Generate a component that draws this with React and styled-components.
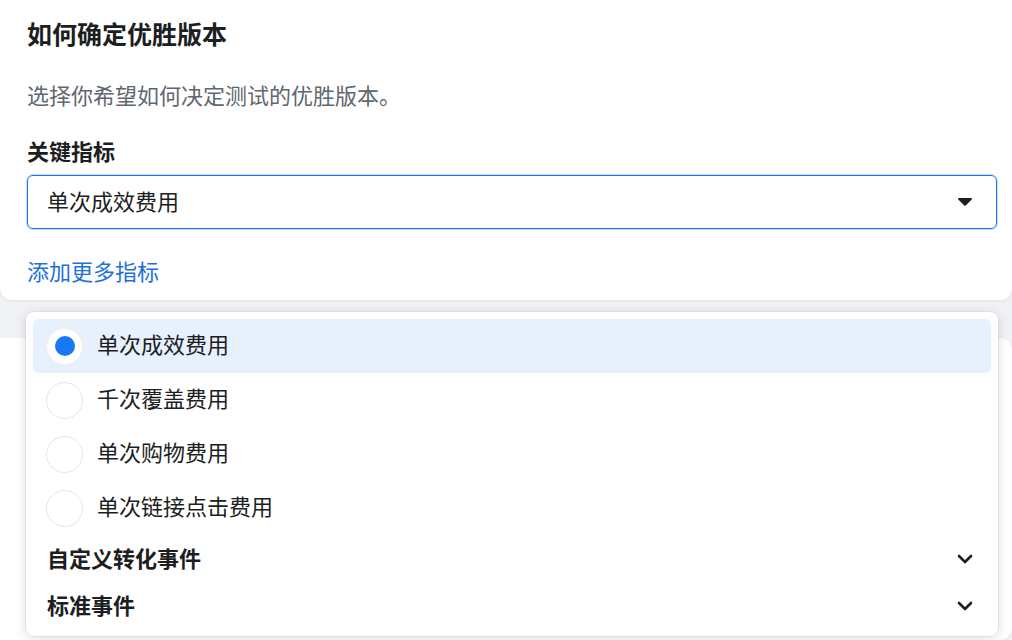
import styled, { createGlobalStyle } from "styled-components";

const GlobalStyle = createGlobalStyle`
  html, body {
    margin: 0;
    padding: 0;
    background: #f0f2f5;
    font-family: "Noto Sans CJK SC", "Noto Sans", sans-serif;
    color: #1c1e21;
  }
`;

const Page = styled.div`
  position: relative;
  width: 1012px;
  height: 640px;
  overflow: hidden;
  display: flex;
  flex-direction: column;
  gap: 38px;
`;

const Card = styled.div`
  background: #fff;
  border-radius: 0 0 12px 12px;
  box-shadow: 0 1px 3px rgba(0, 0, 0, 0.08);
  padding: 14px 15px 14px 27px;
`;

const BackCard = styled.div`
  flex: 1;
  background: #fff;
  border-radius: 12px;
  margin: 0 0 0 -12px;
  box-shadow: 0 1px 3px rgba(0, 0, 0, 0.08);
`;

const Title = styled.h2`
  margin: 0;
  font-size: 25px;
  line-height: 38px;
  font-weight: 700;
`;

const Subtitle = styled.p`
  margin: 26px 0 0;
  font-size: 22px;
  line-height: 32px;
  color: #606770;
`;

const Label = styled.div`
  margin-top: 24px;
  font-size: 22px;
  line-height: 32px;
  font-weight: 700;
`;

const Select = styled.div`
  margin-top: 9px;
  height: 54px;
  box-sizing: border-box;
  border: 1px solid #1877f2;
  box-shadow: 0 0 0 1px rgba(24, 119, 242, 0.25);
  border-radius: 6px;
  display: flex;
  align-items: center;
  justify-content: space-between;
  padding: 0 24px 4px 19px;
  font-size: 22px;
`;

const Link = styled.a`
  display: block;
  margin-top: 25px;
  font-size: 22px;
  line-height: 32px;
  color: #216fdb;
  text-decoration: none;
`;

const Menu = styled.div`
  position: absolute;
  top: 312px;
  left: 26px;
  width: 972px;
  box-sizing: border-box;
  padding: 7px;
  background: #fff;
  border-radius: 8px;
  box-shadow: 0 2px 12px rgba(0, 0, 0, 0.15), 0 0 0 1px rgba(0, 0, 0, 0.04);
`;

const Option = styled.div`
  height: 54px;
  display: flex;
  align-items: center;
  gap: 14px;
  padding-left: 13px;
  border-radius: 6px;
  font-size: 22px;
  background: ${(p) => (p.$active ? "#e7f0fd" : "transparent")};
`;

const OptionText = styled.span`
  margin-bottom: 6px;
`;

const Radio = styled.span`
  width: 37px;
  height: 37px;
  box-sizing: border-box;
  border-radius: 50%;
  background: #fff;
  border: 1px solid ${(p) => (p.$checked ? "#fbe9e4" : "#e4e6eb")};
  display: flex;
  align-items: center;
  justify-content: center;

  &::after {
    content: "";
    width: 20px;
    height: 20px;
    border-radius: 50%;
    background: ${(p) => (p.$checked ? "#1877f2" : "transparent")};
  }
`;

const Group = styled.div`
  height: 47px;
  display: flex;
  align-items: center;
  justify-content: space-between;
  padding: 0 18px 0 14px;
  font-size: 22px;
  font-weight: 700;

  span {
    margin-bottom: 3px;
  }
`;

const Caret = () => (
  <svg width="14" height="8" viewBox="0 0 14 8" style={{ marginTop: 4 }}>
    <path d="M1 0h12c.9 0 1.3 1 .7 1.6L7.7 7.4c-.4.4-1 .4-1.4 0L.3 1.6C-.3 1 .1 0 1 0z" fill="#1c1e21" />
  </svg>
);

const Chevron = () => (
  <svg width="16" height="10" viewBox="0 0 16 10">
    <path d="M2 2l6 6 6-6" fill="none" stroke="#1c1e21" strokeWidth="2.6" strokeLinecap="round" strokeLinejoin="round" />
  </svg>
);

const options = ["单次成效费用", "千次覆盖费用", "单次购物费用", "单次链接点击费用"];
const groups = ["自定义转化事件", "标准事件"];

export default function App() {
  return (
    <>
      <GlobalStyle />
      <Page>
        <Card>
          <Title>如何确定优胜版本</Title>
          <Subtitle>选择你希望如何决定测试的优胜版本。</Subtitle>
          <Label>关键指标</Label>
          <Select>
            <span>单次成效费用</span>
            <Caret />
          </Select>
          <Link href="#">添加更多指标</Link>
        </Card>
        <BackCard />
        <Menu>
          {options.map((o, i) => (
            <Option key={o} $active={i === 0}>
              <Radio $checked={i === 0} />
              <OptionText>{o}</OptionText>
            </Option>
          ))}
          {groups.map((g) => (
            <Group key={g}>
              <span>{g}</span>
              <Chevron />
            </Group>
          ))}
        </Menu>
      </Page>
    </>
  );
}
